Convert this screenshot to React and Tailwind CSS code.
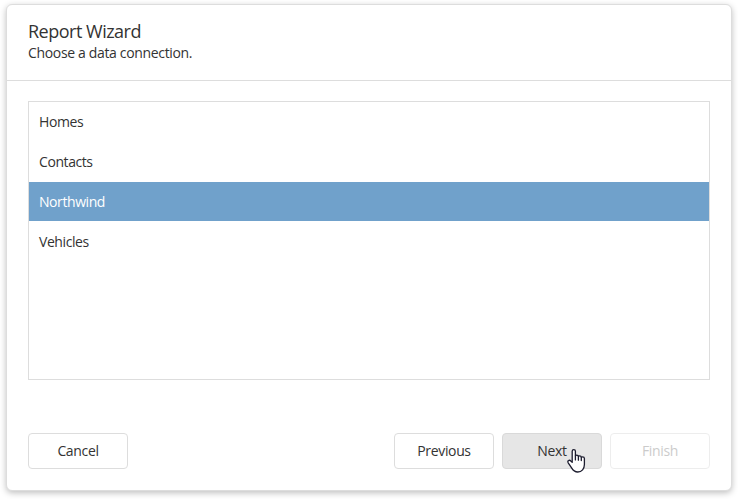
const connections = ["Homes", "Contacts", "Northwind", "Vehicles"];

function Button({ children, className = "" }) {
  return (
    <button
      type="button"
      className={`flex h-9 w-[100px] items-center justify-center rounded border text-sm tracking-[-0.35px] ${className}`}
    >
      {children}
    </button>
  );
}

function HandCursor() {
  return (
    <svg
      className="pointer-events-none absolute left-[65px] top-[15px]"
      width="19"
      height="25"
      viewBox="0 0 19 25"
      fill="white"
      stroke="#1c1c2e"
      strokeWidth="1.3"
      strokeLinejoin="round"
      strokeLinecap="round"
    >
      <path d="M5.2 14.2V3.2C5.2 2.2 5.9 1.6 6.8 1.6S8.4 2.2 8.4 3.2V7.8C8.7 7.3 9.2 7.1 9.8 7.1C10.7 7.1 11.3 7.6 11.4 8.4C11.7 8 12.2 7.8 12.7 7.8C13.6 7.8 14.2 8.3 14.3 9.2C14.6 8.9 15 8.8 15.5 8.8C16.7 8.8 17.4 9.5 17.4 10.5V16.6C17.4 20.8 14.8 24 10.8 24C7.7 24 6 22.4 4.6 19.9L1.2 14.8C.6 13.8.8 13 1.5 12.6C2.2 12.1 3.2 12.3 3.7 12.9Z" />
      <path d="M8.4 8V11.9M11.4 8.6V12.2M14.3 9.4V12.6" fill="none" />
    </svg>
  );
}

export default function App() {
  return (
    <div className="h-[499px] w-[738px] overflow-hidden bg-white pl-1.5 pt-1 font-['Open_Sans','Noto_Sans',sans-serif] text-[#333]">
      <div className="flex h-[487px] w-[726px] flex-col rounded-md border border-[#ddd] bg-white shadow-[0_2px_6px_rgba(0,0,0,0.25)]">
        <header className="h-[76px] border-b border-[#ddd] pl-[21px] pt-3.5">
          <h1 className="text-lg leading-6 tracking-[-0.5px]">Report Wizard</h1>
          <p className="text-sm leading-[19px] tracking-[-0.34px]">Choose a data connection.</p>
        </header>
        <main className="px-[21px] pt-5">
          <ul className="h-[279px] border border-[#ddd] text-sm tracking-[-0.42px]">
            {connections.map((name) => (
              <li
                key={name}
                className={`mb-px flex h-[39px] items-center pl-2.5 pt-px ${
                  name === "Northwind" ? "bg-[#70a1cb] text-white" : ""
                }`}
              >
                {name}
              </li>
            ))}
          </ul>
        </main>
        <footer className="mt-[53px] flex gap-2 px-[21px]">
          <Button className="mr-auto border-[#ddd]">Cancel</Button>
          <Button className="border-[#ddd]">Previous</Button>
          <div className="relative">
            <Button className="border-[#d9d9d9] bg-[#e6e6e6]">Next</Button>
            <HandCursor />
          </div>
          <Button className="border-[#ddd] text-[#999] opacity-50">Finish</Button>
        </footer>
      </div>
    </div>
  );
}
